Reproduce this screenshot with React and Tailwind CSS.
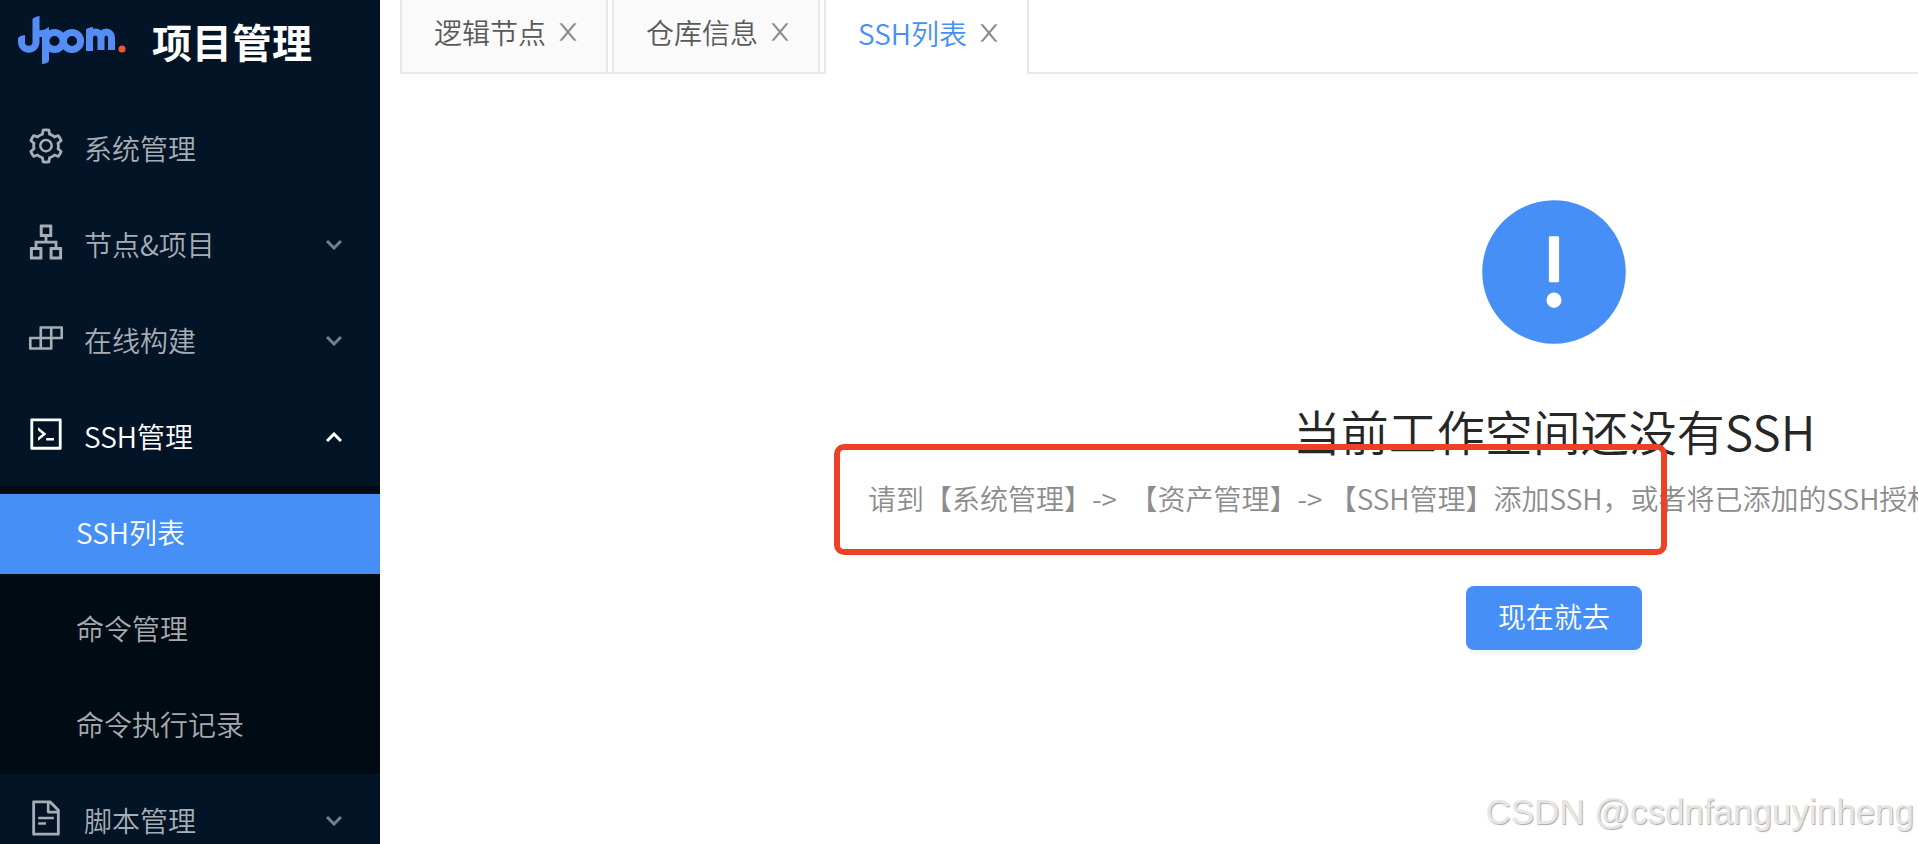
import {
  AiFillExclamationCircle,
  AiOutlineApartment,
  AiOutlineBuild,
  AiOutlineCode,
  AiOutlineFileText,
  AiOutlineSetting,
} from 'react-icons/ai';

const menu = [
  { title: '系统管理', icon: AiOutlineSetting },
  { title: '节点&项目', icon: AiOutlineApartment, expandable: true },
  { title: '在线构建', icon: AiOutlineBuild, expandable: true },
  {
    title: 'SSH管理',
    icon: AiOutlineCode,
    expandable: true,
    open: true,
    children: ['SSH列表', '命令管理', '命令执行记录'],
  },
  { title: '脚本管理', icon: AiOutlineFileText, expandable: true },
];

const tabs = ['逻辑节点', '仓库信息', 'SSH列表'];
const ACTIVE = 'SSH列表';

const Logo = () => (
  <svg viewBox="17 16 110 50" className="w-[110px] h-[50px] shrink-0" fill="none" role="img" aria-label="Jpom">
    <g stroke="#548df5" strokeWidth="7">
      <path d="M21.5 38V42A7.250 7.250 0 0 0 36 42V21" />
      <circle cx="54.5" cy="41" r="8.6" />
      <circle cx="72" cy="41" r="8.6" />
      <path d="M89.5 51V30M89.5 38C89.5 30 101 30 101 38V50M101 38C101 30 111.5 30 111.5 38V50" />
    </g>
    {/* slanted stroke ends */}
    <g fill="#548df5">
      <path d="M32.5 21.5V19.500Q34 16.500 39.5 16V21.5z" />
      <path d="M36 37V30.500Q44 31 49 27V61Q47 64 42 64V37z" />
      <path d="M18 38.500Q19 35.500 25 35V38.500z" />
      <path d="M86 31V29.500Q88 27.500 93 27V31z" />
    </g>
    <circle cx="122" cy="49" r="3.6" fill="#ea5a28" />
  </svg>
);

const CloseIcon = () => (
  <svg viewBox="64 64 896 896" className="w-6 h-6" fill="currentColor">
    <path d="M563.8 512l262.5-312.9c4.4-5.2.7-13.1-6.1-13.1h-79.8c-4.7 0-9.2 2.1-12.3 5.7L511.6 449.8 295.1 191.7c-3-3.6-7.5-5.7-12.3-5.7H203c-6.8 0-10.5 7.9-6.1 13.1L459.4 512 196.9 824.9A7.95 7.95 0 0 0 203 838h79.8c4.7 0 9.2-2.1 12.3-5.7l216.5-258.1 216.5 258.1c3 3.6 7.5 5.7 12.3 5.7h79.8c6.8 0 10.5-7.9 6.1-13.1L563.8 512z" />
  </svg>
);

const Arrow = ({ open }) => (
  <svg viewBox="0 0 16 10" className={`w-4 h-[10px] mt-0.5 ${open ? 'rotate-180' : 'opacity-70'}`} fill="none" stroke="currentColor" strokeWidth="3">
    <path d="M1 1L8 8L15 1" />
  </svg>
);

const MenuItem = ({ item }) => {
  const Icon = item.icon;
  return (
    <li className={item.children ? '' : 'pb-2'}>
      <button
        className={`flex items-center w-full h-20 mt-2 pl-[26px] pr-[38px] pb-1 text-left ${
          item.open ? 'text-white' : 'text-[#a6adb4]'
        }`}
      >
        <Icon className="w-10 h-10 mr-[18px] mb-1 shrink-0" />
        <span className="flex-1">{item.title}</span>
        {item.expandable && <Arrow open={item.open} />}
      </button>
      {item.children && (
        <ul className="flex flex-col gap-4 mt-2 py-2 bg-[#010b14]">
          {item.children.map((child) => (
            <li key={child}>
              <a
                href="#"
                className={`flex items-center h-20 pl-19 pb-1 ${
                  child === ACTIVE ? 'bg-[#458ff7] text-white' : 'text-[#a6a9ad]'
                }`}
              >
                {child}
              </a>
            </li>
          ))}
        </ul>
      )}
    </li>
  );
};

const Sidebar = () => (
  <aside className="w-[380px] shrink-0 bg-[#021426] text-[28px]">
    <div className="flex items-center h-[102px] pl-[17px] pb-5">
      <Logo />
      <h1 className="ml-[25px] text-[40px] font-bold text-white">项目管理</h1>
    </div>
    <nav>
      <ul>
        {menu.map((item) => (
          <MenuItem key={item.title} item={item} />
        ))}
      </ul>
    </nav>
  </aside>
);

const Tab = ({ title, active }) => (
  <div
    className={`flex items-center gap-2.5 pl-8 pr-[26px] pb-2 border-x-2 border-[#e8e8e8] ${
      active ? 'bg-white text-[#458ff7]' : 'border-b-2 bg-[#fafafa] text-[#595959]'
    }`}
  >
    <button>{title}</button>
    <button aria-label="关闭" className="text-[#8c8c8c]">
      <CloseIcon />
    </button>
  </div>
);

const TabBar = () => (
  <div className="flex h-[74px] text-[28px]">
    {tabs.map((title) => (
      <div key={title} className="flex">
        <Tab title={title} active={title === ACTIVE} />
        {title !== ACTIVE && <div className="w-1 border-b-2 border-[#e8e8e8]" />}
      </div>
    ))}
    <div className="flex-1 border-b-2 border-[#e8e8e8]" />
  </div>
);

const EmptyResult = () => (
  <section className="flex flex-col items-center w-[1380px] shrink-0 pt-[116px]">
    <AiFillExclamationCircle className="w-[164px] h-[164px] text-[#458ff7]" />
    <h2 className="mt-8 text-[48px] leading-[88px] text-[#262626]">当前工作空间还没有SSH</h2>
    <p className="self-start pl-1 text-[28px] leading-[48px] whitespace-nowrap text-[#8c8c8c]">
      请到【系统管理】-&gt;&nbsp; 【资产管理】-&gt; 【SSH管理】添加SSH，或者将已添加的SSH授权关联到此工作空间
    </p>
    <button className="mt-16 h-16 px-8 pb-1 rounded-lg bg-[#458ff7] text-[28px] text-white shadow-[0_4px_0_rgba(0,0,0,0.04)]">
      现在就去
    </button>
  </section>
);

export default function App() {
  return (
    <div className="relative flex h-screen overflow-hidden bg-white font-['Noto_Sans_CJK_SC',sans-serif] font-[350]">
      <Sidebar />
      <main className="flex-1 min-w-0 pl-5">
        <TabBar />
        <div className="flex justify-start pl-[464px]">
          <EmptyResult />
        </div>
      </main>
      <div className="absolute left-[834px] top-[444px] w-[833px] h-[111px] rounded-[10px] border-[6px] border-[#ec4127]" />
      <div className="absolute right-1 bottom-1.5 font-['Liberation_Sans',sans-serif] text-[35px] text-[#e6e6e6] [text-shadow:1px_1px_1px_#aaa]">
        CSDN @csdnfanguyinheng
      </div>
    </div>
  );
}
